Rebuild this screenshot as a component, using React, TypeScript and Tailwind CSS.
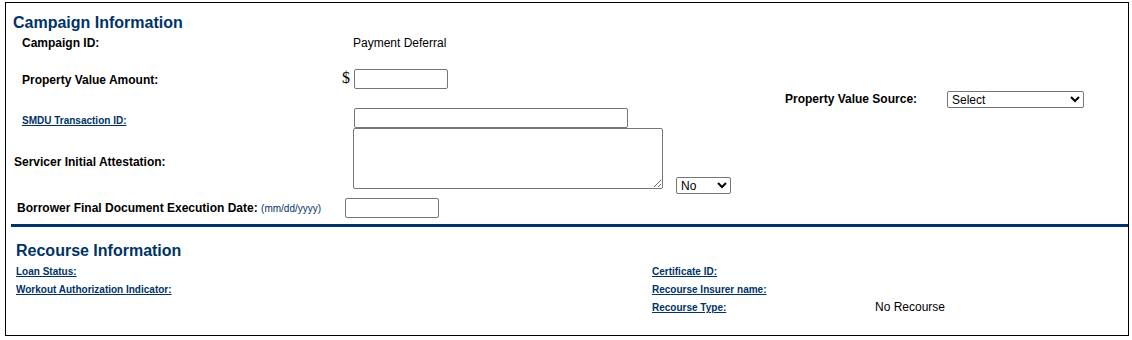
import React from "react";

const navy = "text-[#003366]";

function FieldLink({ children }: { children: React.ReactNode }) {
    return (
        <a href="#" className={`text-[10px] font-bold underline leading-[18px] ${navy}`}>
            {children}
        </a>
    );
}

export default function App() {
    return (
        <div className="bg-white min-h-[340px] pt-[2px] pl-[5px] font-['Liberation_Sans',Arial,sans-serif] text-black">
            <div className="w-[1124px] h-[334px] border border-black flex flex-col">
                {/* Campaign Information */}
                <div className="flex">
                    <div className="w-[734px] flex flex-col">
                        <h2 className={`h-[31px] pt-[10px] pl-[7px] text-[16px] leading-[20px] font-bold ${navy}`}>
                            Campaign Information
                        </h2>

                        <div className="flex items-center h-[18px] text-[12px] leading-[18px]">
                            <div className="w-[347px] pl-[16px] font-bold">Campaign ID:</div>
                            <div>Payment Deferral</div>
                        </div>

                        <div className="flex items-start h-[20px] mt-[17px] text-[12px] leading-[18px]">
                            <div className="w-[336px] pl-[16px] mt-[2px] font-bold">Property Value Amount:</div>
                            <div className="w-[12px] self-center font-['Liberation_Serif',serif] text-[16px] leading-[20px] -mt-[2px]">$</div>
                            <input className="w-[94px] h-[20px] border border-[#767676] rounded-[2px] bg-white" />
                        </div>

                        <div className="flex items-start h-[20px] mt-[19px]">
                            <div className="w-[348px] pl-[16px] mt-[4px] text-[10px] leading-[18px]">
                                <FieldLink>SMDU Transaction ID:</FieldLink>
                            </div>
                            <input className="w-[274px] h-[20px] border border-[#767676] rounded-[2px] bg-white" />
                        </div>

                        <div className="flex h-[67px] text-[12px] leading-[18px]">
                            <div className="w-[347px] pl-[8px] self-center font-bold">Servicer Initial Attestation:</div>
                            <textarea className="w-[310px] h-[61px] border border-[#767676] rounded-[2px] bg-white" />
                            <select
                                defaultValue="No"
                                className="ml-[13px] self-end mb-[1px] w-[55px] h-[17px] border border-[#767676] rounded-[2px] bg-white text-[12px]"
                            >
                                <option>No</option>
                                <option>Yes</option>
                            </select>
                        </div>

                        <div className="flex items-center h-[20px] mt-[3px] text-[12px] leading-[18px]">
                            <div className="w-[339px] pl-[11px]">
                                <span className="font-bold">Borrower Final Document Execution Date:</span>{" "}
                                <span className={`text-[10px] ${navy}`}>(mm/dd/yyyy)</span>
                            </div>
                            <input className="w-[94px] h-[20px] border border-[#767676] rounded-[2px] bg-white" />
                        </div>
                    </div>

                    <div className="flex items-center h-[18px] mt-[87px] pl-[45px] text-[12px] leading-[18px]">
                        <div className="w-[162px] font-bold">Property Value Source:</div>
                        <select
                            defaultValue="Select"
                            className="w-[137px] h-[17px] border border-[#767676] rounded-[2px] bg-white text-[12px]"
                        >
                            <option>Select</option>
                            <option>Appraisal</option>
                            <option>BPO</option>
                            <option>AVM</option>
                        </select>
                    </div>
                </div>

                {/* Divider */}
                <div className="mt-[6px] ml-[5px] h-[3px] bg-[#003366]" />

                {/* Recourse Information */}
                <h2 className={`mt-[14px] h-[20px] pl-[10px] text-[16px] leading-[20px] font-bold ${navy}`}>
                    Recourse Information
                </h2>
                <div className="mt-[2px] pl-[10px] grid grid-cols-[636px_223px_1fr] auto-rows-[18px] items-center text-[10px] leading-[18px]">
                    <div><FieldLink>Loan Status:</FieldLink></div>
                    <div><FieldLink>Certificate ID:</FieldLink></div>
                    <div />
                    <div><FieldLink>Workout Authorization Indicator:</FieldLink></div>
                    <div><FieldLink>Recourse Insurer name:</FieldLink></div>
                    <div />
                    <div />
                    <div><FieldLink>Recourse Type:</FieldLink></div>
                    <div className="text-[12px] -mt-[2px]">No Recourse</div>
                </div>
            </div>
        </div>
    );
}
